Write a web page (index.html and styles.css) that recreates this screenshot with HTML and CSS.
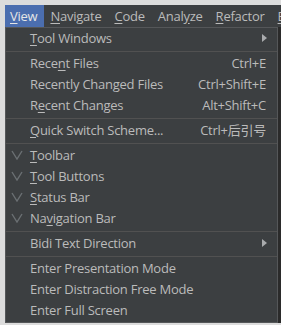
FILE: index.html
```html
<!DOCTYPE html>
<html>
<head>
<meta charset="utf-8">
<link rel="stylesheet" href="styles.css">
</head>
<body>
<div class="window">
  <div class="menubar">
    <span class="mb-item active"><u>V</u>iew</span>
    <span class="mb-item"><u>N</u>avigate</span>
    <span class="mb-item"><u>C</u>ode</span>
    <span class="mb-item">Anal<u>y</u>ze</span>
    <span class="mb-item"><u>R</u>efactor</span>
    <span class="mb-item"><u>B</u></span>
  </div>
  <div class="editor">
    <div class="popup">
      <div class="row"><span class="label"><u>T</u>ool Windows</span><span class="arrow"></span></div>
      <div class="sep"></div>
      <div class="row"><span class="label">Rece<u>n</u>t Files</span><span class="key">Ctrl+E</span></div>
      <div class="row"><span class="label">Recently Changed Files</span><span class="key">Ctrl+Shift+E</span></div>
      <div class="row"><span class="label">R<u>e</u>cent Changes</span><span class="key">Alt+Shift+C</span></div>
      <div class="sep"></div>
      <div class="row"><span class="label"><u>Q</u>uick Switch Scheme...</span><span class="key">Ctrl+后引号</span></div>
      <div class="sep"></div>
      <div class="row"><svg class="check" width="12" height="10" viewBox="0 0 12 10"><polyline points="1,1 6,9 11,1" fill="none" stroke="#6b7073" stroke-width="1.4"/></svg><span class="label"><u>T</u>oolbar</span></div>
      <div class="row"><svg class="check" width="12" height="10" viewBox="0 0 12 10"><polyline points="1,1 6,9 11,1" fill="none" stroke="#6b7073" stroke-width="1.4"/></svg><span class="label"><u>T</u>ool Buttons</span></div>
      <div class="row"><svg class="check" width="12" height="10" viewBox="0 0 12 10"><polyline points="1,1 6,9 11,1" fill="none" stroke="#6b7073" stroke-width="1.4"/></svg><span class="label"><u>S</u>tatus Bar</span></div>
      <div class="row"><svg class="check" width="12" height="10" viewBox="0 0 12 10"><polyline points="1,1 6,9 11,1" fill="none" stroke="#6b7073" stroke-width="1.4"/></svg><span class="label">Na<u>v</u>igation Bar</span></div>
      <div class="sep"></div>
      <div class="row"><span class="label">Bidi Text Direction</span><span class="arrow"></span></div>
      <div class="sep"></div>
      <div class="row"><span class="label">Enter Presentation Mode</span></div>
      <div class="row"><span class="label">Enter Distraction Free Mode</span></div>
      <div class="row"><span class="label">Enter Full Screen</span></div>
    </div>
  </div>
</div>
</body>
</html>
```
FILE: styles.css
```css
html, body {
  margin: 0;
  padding: 0;
}
body {
  background: #dcdcdc;
  width: 281px;
  height: 325px;
  overflow: hidden;
  font-family: "Open Sans", "Noto Sans CJK SC", sans-serif;
  font-size: 13px;
  letter-spacing: -0.25px;
  color: #bbbbbb;
}
.window {
  margin: 5px 0 0 5px;
  width: 276px;
  height: 318px;
  display: flex;
  flex-direction: column;
}
.menubar {
  height: 22px;
  background: #3c3f41;
  display: flex;
  align-items: stretch;
  white-space: nowrap;
  overflow: hidden;
}
.mb-item {
  display: flex;
  align-items: center;
  padding: 0 6px 1px 5px;
  margin-right: 2px;
}
.mb-item.active {
  background: #4b6eaf;
  color: #e6e6e6;
  padding-right: 7px;
  margin-right: 1px;
}
u {
  text-decoration: underline;
  text-underline-offset: 2px;
}
.editor {
  flex: 1;
  background: #2b2b2b;
  position: relative;
}
.popup {
  position: absolute;
  left: 0;
  top: 0;
  width: 271px;
  background: #3c3f41;
  border: 1px solid #555759;
  padding: 0 0 1px 0;
}
.row {
  height: 21px;
  box-sizing: border-box;
  display: flex;
  align-items: center;
  padding: 0 11px 2px 24px;
  position: relative;
  white-space: nowrap;
}
.label {
  flex: 1;
}
.key {
  text-align: right;
}
.check {
  position: absolute;
  left: 5px;
  top: 5px;
}
.arrow {
  width: 0;
  height: 0;
  border-top: 4.5px solid transparent;
  border-bottom: 4.5px solid transparent;
  border-left: 5px solid #a9abad;
  margin-right: -1px;
}
.sep {
  height: 1px;
  background: #515151;
  margin: 2px 0 1px 0;
}
```
